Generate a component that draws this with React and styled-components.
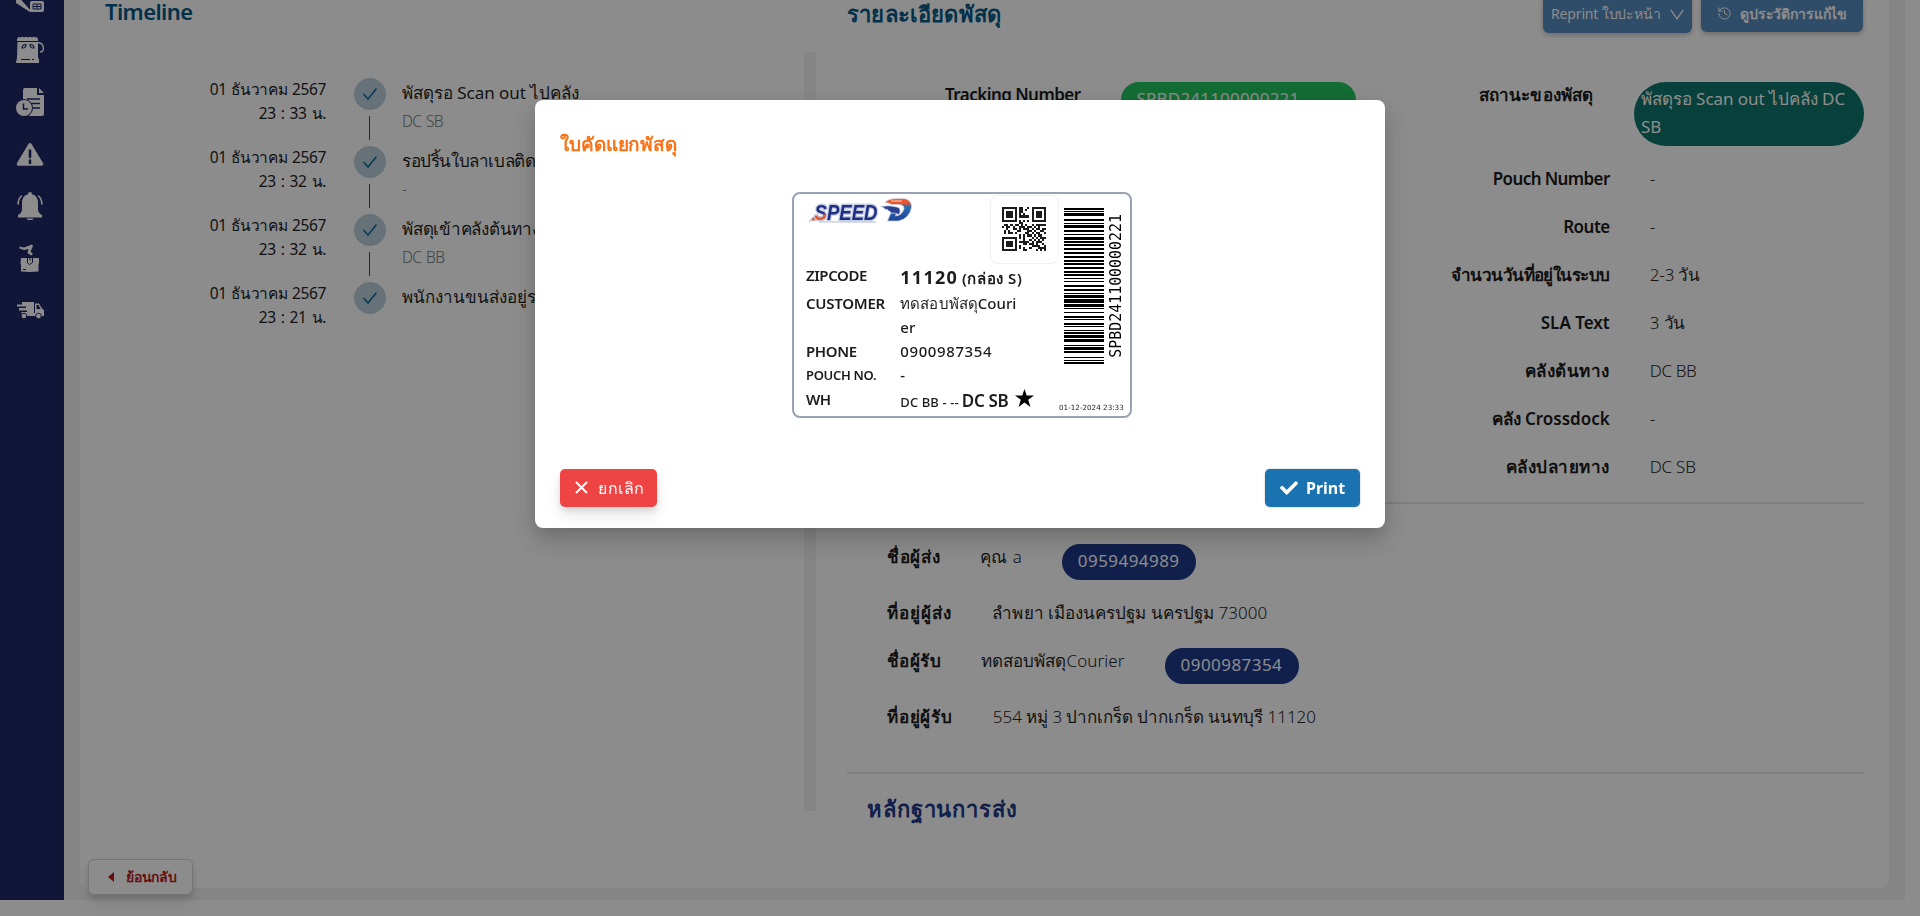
import React from 'react';
import styled, { createGlobalStyle } from 'styled-components';
import { FaCheck } from 'react-icons/fa';
import { History } from 'lucide-react';

const GlobalStyle = createGlobalStyle`
  * { box-sizing: border-box; }
  body {
    margin: 0;
    height: 916px;
    overflow: hidden;
    background: #fff;
    color: #262626;
    font-family: "Noto Sans", sans-serif;
    font-size: 17px;
    line-height: 28px;
  }
`;

/* ---------- page shell ---------- */

const Page = styled.div`
  display: flex;
  width: 1905px;
  height: 900px;
  background: #f3f3f3;
`;

const Sidebar = styled.nav`
  width: 64px;
  height: 916px;
  flex: none;
  display: flex;
  flex-direction: column;
  align-items: center;
  gap: 24px;
  margin-top: -16px;
  background: #1f2868;
  color: #fff;
`;

const SideIcon = styled.svg`
  width: 28px;
  height: 28px;
  flex: none;
  margin-right: 4px;
`;

const Card = styled.main`
  display: flex;
  width: 1809px;
  height: 888px;
  margin-left: 16px;
  background: #fff;
  border-radius: 0 0 8px 8px;
`;

/* ---------- timeline ---------- */

const TimelinePane = styled.section`
  width: 724px;
  flex: none;
  display: flex;
  flex-direction: column;
`;

const Heading = styled.h2`
  margin: 0;
  font-size: 22px;
  font-weight: 600;
  line-height: ${(p) => p.$lh || 28}px;
  letter-spacing: ${(p) => p.$ls || 0}px;
  color: ${(p) => p.$color || '#075985'};
  white-space: nowrap;
`;

const TimelineHead = styled.div`
  height: 78px;
  padding-left: 25px;
`;

const Step = styled.div`
  display: grid;
  grid-template-columns: 246px 32px 1fr;
  column-gap: 28px;
  height: 68px;
`;

const StepWhen = styled.div`
  margin-top: -1px;
`;

const StepDate = styled.div`
  font-size: 15.5px;
  line-height: 24px;
  letter-spacing: -0.35px;
  word-spacing: ${(p) => p.$ws}px;
  text-align: right;
  color: #1f1f1f;
`;

const StepMark = styled.div`
  display: flex;
  flex-direction: column;
  align-items: center;
  gap: 6px;
`;

const StepDot = styled.div`
  width: 32px;
  height: 32px;
  border-radius: 50%;
  background: #bcd0da;
  display: grid;
  place-items: center;
`;

const StepLine = styled.div`
  width: 1px;
  height: 24px;
  margin-right: 1px;
  background: #075985;
`;

const StepText = styled.div`
  margin: 1px 0 0 -12px;
  white-space: nowrap;
  color: #1f1f1f;
  letter-spacing: ${(p) => p.$ls || 0}px;
`;

const StepPlace = styled.div`
  font-size: 15.5px;
  font-weight: 350;
  letter-spacing: -0.7px;
  word-spacing: 1.5px;
  color: #7a7a7a;
`;

const BackButton = styled.button`
  display: flex;
  align-items: center;
  gap: 12px;
  width: 105px;
  height: 36px;
  margin: auto 0 -7px 8px;
  padding: 0 0 0 19px;
  border: 1px solid #d4d4d4;
  border-radius: 6px;
  background: #fff;
  color: #b91c1c;
  font: 600 14px/24px "Noto Sans", sans-serif;
  letter-spacing: -0.2px;
  box-shadow: 0 4px 6px rgba(0, 0, 0, 0.12), 0 10px 15px rgba(0, 0, 0, 0.06);
`;

const Divider = styled.div`
  width: 12px;
  height: 759px;
  margin-top: 52px;
  background: #f3f3f3;
`;

/* ---------- parcel detail ---------- */

const DetailPane = styled.section`
  flex: 1;
  display: flex;
  flex-direction: column;
  padding: 0 25px 0 31px;
`;

const DetailHead = styled.header`
  display: flex;
  align-items: flex-start;
  height: 80px;
`;

const HeadActions = styled.div`
  display: flex;
  gap: 9px;
  margin: -5px 1px 0 auto;
`;

const HeadButton = styled.button`
  display: flex;
  align-items: center;
  gap: ${(p) => p.$gap}px;
  width: ${(p) => p.$w}px;
  height: ${(p) => p.$h}px;
  padding: 0 0 0 ${(p) => p.$pad}px;
  border: 0;
  border-radius: 6px;
  background: #578abd;
  color: #fff;
  font: ${(p) => p.$weight} 14px/24px "Noto Sans", sans-serif;
  letter-spacing: -0.15px;
  white-space: nowrap;
  box-shadow: 0 2px 5px rgba(0, 0, 0, 0.25);
`;

const Columns = styled.div`
  display: grid;
  grid-template-columns: 1fr 1fr;
  height: 424px;
  border-bottom: 2px solid #e5e5e5;
`;

const Column = styled.div`
  display: flex;
  flex-direction: column;
`;

const PillRow = styled.div`
  display: flex;
  justify-content: flex-end;
  align-items: flex-start;
  gap: ${(p) => p.$gap}px;
  height: 75px;

  & > span { margin-top: 1px; }
`;

const Label = styled.span`
  font-weight: 600;
  letter-spacing: ${(p) => p.$ls || 0}px;
  color: #1a1a1a;
  white-space: nowrap;
`;

const Value = styled.span`
  font-weight: 350;
  letter-spacing: ${(p) => p.$ls || 0}px;
  word-spacing: ${(p) => p.$ws || 0}px;
  color: #262626;
  white-space: nowrap;
`;

const StatusPill = styled.div`
  width: ${(p) => p.$w}px;
  margin-top: 2px;
  padding: 3px ${(p) => p.$pad}px 5px;
  border-radius: 32px;
  background: ${(p) => p.$color};
  color: #fff;
  letter-spacing: ${(p) => p.$ls || 0}px;
`;

const DetailRow = styled.div`
  display: grid;
  grid-template-columns: 1fr 1fr;
  height: 48px;
  padding: 10px 0;

  ${Label} { text-align: right; }
  ${Value} { padding-left: 40px; }
`;

const Contacts = styled.div`
  height: 270px;
  padding: 29px 0 0 40px;
  border-bottom: 2px solid #e5e5e5;
`;

const ContactRow = styled.div`
  display: flex;
  align-items: flex-start;
  gap: 40px;
  height: ${(p) => p.$h}px;
  padding-top: 10px;
`;

const PhonePill = styled.span`
  width: 134px;
  height: 36px;
  margin-top: 1px;
  padding: 3px 0 5px 16px;
  border-radius: 18px;
  background: #1e3a8a;
  color: #fff;
  letter-spacing: 0.45px;
`;

const Evidence = styled.div`
  padding: 19px 0 0 20px;
`;

/* ---------- print dialog ---------- */

const Overlay = styled.div`
  position: fixed;
  inset: 0;
  padding: 100px 0 0 535px;
  background: rgba(0, 0, 0, 0.45);
`;

const Dialog = styled.div`
  width: 850px;
  height: 428px;
  padding: 30px 25px 0;
  border-radius: 8px;
  background: #fff;
  box-shadow: 0 6px 16px rgba(0, 0, 0, 0.08), 0 3px 6px -4px rgba(0, 0, 0, 0.12),
    0 9px 28px 8px rgba(0, 0, 0, 0.05), 0 14px 28px rgba(0, 0, 0, 0.12);
`;

const DialogTitle = styled.h3`
  margin: 0;
  font-size: 19px;
  font-weight: 600;
  line-height: 28px;
  letter-spacing: -0.1px;
  color: #f97316;
`;

const DialogFooter = styled.footer`
  display: flex;
  justify-content: space-between;
  margin-top: 51px;
`;

const ActionButton = styled.button`
  display: flex;
  align-items: center;
  gap: ${(p) => p.$gap}px;
  width: ${(p) => p.$w}px;
  height: 38px;
  padding: 0 0 1px 15px;
  border: 0;
  border-radius: 5px;
  background: ${(p) => p.$color};
  color: #fff;
  font: ${(p) => p.$weight} 16px/24px "Noto Sans", sans-serif;
  letter-spacing: ${(p) => p.$ls || 0}px;
  box-shadow: ${(p) => p.$shadow};
`;

/* ---------- parcel label ---------- */

const Slip = styled.div`
  display: flex;
  width: 340px;
  height: 226px;
  margin: 34px 0 0 232px;
  border: 2px solid #9aa1b3;
  border-radius: 8px;
  color: #1c1c1c;
  font-size: 15px;
  line-height: 24px;
`;

const SlipMain = styled.div`
  width: 265px;
  flex: none;
`;

const SlipTop = styled.div`
  display: flex;
  justify-content: space-between;
  height: 69px;
  padding: 1px 0 0 14px;
`;

const LogoArt = styled.svg`
  width: 106px;
  height: 30px;
  margin-top: -1px;
  overflow: visible;
`;

const QrFrame = styled.div`
  display: grid;
  place-items: center;
  width: 69px;
  height: 69px;
  border: 1px solid #f0f0f0;
  border-radius: 8px;
`;

const SlipRow = styled.div`
  display: grid;
  grid-template-columns: 95px 1fr;
  min-height: ${(p) => p.$h || 24}px;
  padding-left: 12px;
  white-space: nowrap;
`;

const SlipKey = styled.span`
  font-size: ${(p) => p.$size || 15}px;
  font-weight: 600;
  letter-spacing: ${(p) => p.$ls || 0}px;
`;

const SlipValue = styled.span`
  padding-top: ${(p) => p.$drop || 0}px;
  margin-left: -0.7px;
  font-weight: 500;
  letter-spacing: ${(p) => p.$ls || 0}px;
`;

const Customer = styled(SlipValue)`
  width: 119px;
  white-space: normal;
  word-break: break-all;
`;

const Zip = styled.b`
  font-size: 18px;
  font-weight: 700;
  letter-spacing: 1.25px;
  margin-right: 4px;
`;

const BoxSize = styled.b`
  font-weight: 600;
  letter-spacing: 0.55px;
`;

const Origin = styled.span`
  font-size: 13px;
  letter-spacing: 0.1px;
`;

const Destination = styled.b`
  font-size: 17px;
  font-weight: 600;
  letter-spacing: -0.3px;
  margin: 0 6px 0 3px;
`;

const SlipSide = styled.div`
  flex: 1;
  display: flex;
  flex-direction: column;
`;

const BarcodeBlock = styled.div`
  display: flex;
  align-items: center;
  gap: 5px;
  height: 156px;
  margin: 13.5px 0 0 4.7px;
`;

const BarcodeText = styled.span`
  writing-mode: vertical-rl;
  transform: rotate(180deg);
  font: 15px/15px "DejaVu Sans Mono", monospace;
  letter-spacing: -0.05px;
  color: #000;
`;

const PrintedAt = styled.span`
  align-self: flex-end;
  margin: auto 9px 3px 0;
  font: 7.2px/10px "DejaVu Sans", sans-serif;
  white-space: nowrap;
`;

/* ---------- QR code, version 1, level Q, mask 0 ---------- */

const QR_SIZE = 21;
const DATA_WORDS = 13;
const ECC_WORDS = 13;
const LEVEL_BITS = 3;
const ALPHABET = '0123456789ABCDEFGHIJKLMNOPQRSTUVWXYZ $%*+-./:';

function gfMul(a, b) {
  let z = 0;
  for (let i = 7; i >= 0; i--) {
    z = (z << 1) ^ ((z >>> 7) * 0x11d);
    z ^= ((b >>> i) & 1) * a;
  }
  return z;
}

function qrMatrix(text) {
  const N = QR_SIZE;
  const bits = [];
  const put = (v, n) => {
    for (let i = n - 1; i >= 0; i--) bits.push((v >>> i) & 1);
  };
  put(2, 4);
  put(text.length, 9);
  for (let i = 0; i + 1 < text.length; i += 2) {
    put(ALPHABET.indexOf(text[i]) * 45 + ALPHABET.indexOf(text[i + 1]), 11);
  }
  put(0, Math.min(4, DATA_WORDS * 8 - bits.length));
  while (bits.length % 8) bits.push(0);
  for (let pad = 0xec; bits.length < DATA_WORDS * 8; pad ^= 0xec ^ 0x11) put(pad, 8);
  const data = [];
  for (let i = 0; i < bits.length; i += 8) data.push(parseInt(bits.slice(i, i + 8).join(''), 2));

  const gen = Array(ECC_WORDS).fill(0);
  gen[ECC_WORDS - 1] = 1;
  let root = 1;
  for (let i = 0; i < ECC_WORDS; i++) {
    for (let j = 0; j < ECC_WORDS; j++) {
      gen[j] = gfMul(gen[j], root);
      if (j + 1 < ECC_WORDS) gen[j] ^= gen[j + 1];
    }
    root = gfMul(root, 2);
  }
  const ecc = Array(ECC_WORDS).fill(0);
  data.forEach((d) => {
    const f = d ^ ecc.shift();
    ecc.push(0);
    gen.forEach((c, i) => { ecc[i] ^= gfMul(c, f); });
  });
  const words = [...data, ...ecc];

  const m = Array.from({ length: N }, () => Array(N).fill(null));
  [[3, 3], [17, 3], [3, 17]].forEach(([cx, cy]) => {
    for (let y = -4; y <= 4; y++) {
      for (let x = -4; x <= 4; x++) {
        if (m[cy + y] === undefined || cx + x < 0 || cx + x >= N) continue;
        const k = Math.max(Math.abs(x), Math.abs(y));
        m[cy + y][cx + x] = k !== 2 && k !== 4 ? 1 : 0;
      }
    }
  });
  for (let i = 8; i < 13; i++) m[6][i] = m[i][6] = (i + 1) % 2;

  const info = LEVEL_BITS << 3;
  let rem = info;
  for (let i = 0; i < 10; i++) rem = (rem << 1) ^ ((rem >>> 9) * 0x537);
  const format = ((info << 10) | rem) ^ 0x5412;
  const bit = (i) => (format >>> i) & 1;
  for (let i = 0; i <= 5; i++) m[i][8] = bit(i);
  m[7][8] = bit(6);
  m[8][8] = bit(7);
  m[8][7] = bit(8);
  for (let i = 9; i < 15; i++) m[8][14 - i] = bit(i);
  for (let i = 0; i < 8; i++) m[8][N - 1 - i] = bit(i);
  for (let i = 8; i < 15; i++) m[N - 15 + i][8] = bit(i);
  m[N - 8][8] = 1;

  let i = 0;
  for (let right = N - 1; right >= 1; right -= 2) {
    if (right === 6) right = 5;
    for (let v = 0; v < N; v++) {
      for (let j = 0; j < 2; j++) {
        const x = right - j;
        const y = ((right + 1) & 2) === 0 ? N - 1 - v : v;
        if (m[y][x] === null) {
          m[y][x] = ((words[i >> 3] >>> (7 - (i & 7))) & 1) ^ ((x + y) % 2 === 0 ? 1 : 0);
          i++;
        }
      }
    }
  }
  return m;
}

function QrCode({ text }) {
  const d = qrMatrix(text)
    .flatMap((row, y) => row.map((on, x) => (on ? `M${x} ${y}h1v1h-1z` : '')))
    .join('');
  return (
    <svg width="44.3" height="44.3" viewBox={`0 0 ${QR_SIZE} ${QR_SIZE}`} shapeRendering="crispEdges">
      <path d={d} fill="#1c1c1c" />
    </svg>
  );
}

/* ---------- Code 128 barcode ---------- */

const CODE_WIDTHS = [
  '211214', '213113', '313121', '131123', '112313', '113141', '311222',
  '231212', '212222', '212222', '222221', '213212', '223112', '2331112',
].join('');

function Barcode() {
  let y = 156;
  const bars = [];
  [...CODE_WIDTHS].forEach((w, i) => {
    y -= Number(w);
    if (i % 2 === 0) bars.push(<rect key={i} x="0" y={y} width="40" height={w} />);
  });
  return <svg width="40" height="156">{bars}</svg>;
}

/* ---------- drawings ---------- */

const DARK = '#1f2868';

const SIDE_ICONS = [
  <g key="scan">
    <path d="M0 10 16 28 H14 L0 19z" fill="#fff" />
    <rect x="14" y="17" width="14" height="11" rx="2" fill="#fff" />
    <path d="M17 20h8v5h-8zM17 22.500h8M21 20v5" fill="none" stroke={DARK} strokeWidth="1" />
  </g>,
  <g key="pouch">
    <path d="M1 3q1.500-3 3.500-1.500q1.500-1.500 3.500 0q2-1.500 4 0q2-1.500 4 0q2-1.500 3.500 0q2-1 2.500 1.500v2H1z" fill="#fff" />
    <path d="M1.500 6H22V21q1.500 3 1 5.500q-.3.500-1 .5H1q-1.300-.3-1-1.500q.8-1.500 1-4z" fill="#fff" />
    <path d="M22 6.500q5 .5 5.500 5.500q0 4-3.500 4" fill="none" stroke="#fff" strokeWidth="1.400" />
    <path d="M6 12q0-3.500 4-3.500q0 4-4 3.500zM18 12q0-3.500-4-3.500q0 4 4 3.500z" fill="none" stroke={DARK} strokeWidth="1.100" />
    <path d="M5 23.500h9M16 23.500h2" stroke={DARK} strokeWidth="1" />
  </g>,
  <g key="report">
    <path d="M9 0H21V7H28V26q0 2-2 2H7V2q0-2 2-2z" fill="#fff" />
    <path d="M23 0 28 5H23z" fill="#fff" />
    <path d="M11 11h13M15 15.500h9M17 20h7" stroke={DARK} strokeWidth="1.300" />
    <circle cx="8" cy="20" r="9" fill={DARK} />
    <circle cx="8" cy="20" r="8" fill="#fff" />
    <path d="M7.500 15.500V21H12" fill="none" stroke={DARK} strokeWidth="1.500" />
  </g>,
  <g key="warning">
    <path d="M12.300 4.200q1.700-2.400 3.400 0L27 23q1 2.500-1.500 2.800H2.500Q0 25.500 1 23z" fill="#fff" />
    <path d="M14 10.500v6.500M14 20.500v2.500" stroke={DARK} strokeWidth="2.600" strokeLinecap="round" />
  </g>,
  <g key="bell">
    <path d="M14 0q2 0 2 2.300q6 1.500 6 8.700v6q0 4 4 6v2.500H2V23q4-2 4-6v-6q0-7.200 6-8.700Q12 0 14 0z" fill="#fff" />
    <path d="M10.500 26.500h7q-1 2-3.500 2t-3.500-2z" fill="#fff" />
    <path d="M5.500 4Q2 7 2.200 12M22.500 4Q26 7 25.800 12" fill="none" stroke="#fff" strokeWidth="1.600" strokeLinecap="round" />
  </g>,
  <g key="pickup">
    <path d="M3.500 2.500 8 3.500 16 .5 17 2 14.500 7.500 17 10 15 11.500 11.500 9 12.500 5 8 6 3.500 4.500z" fill="#fff" />
    <path d="M5 14H23V19L22.500 21V27.500q-9 .8-17.500 0V21L4.500 19z" fill="#fff" />
    <path d="M11.500 14v5l2 1.500 3-2V14M7 25.500h3M14 13.500v3" fill="none" stroke={DARK} strokeWidth="1" />
  </g>,
  <g key="truck">
    <path d="M6 6H18V20H5.500V16H11V14.500H3V12H10V10.500H1V8.500H6z" fill="#fff" />
    <path d="M19 7.500h4l3 5 2 1.500v6H19zM17 17h3v3h-3z" fill="#fff" />
    <path d="M20.500 9H22.500L24.500 13H20.500z" fill={DARK} />
    <circle cx="8" cy="20" r="2.800" fill="#fff" stroke={DARK} strokeWidth="0.900" />
    <circle cx="22.500" cy="20" r="2.800" fill="#fff" stroke={DARK} strokeWidth="0.900" />
  </g>,
];

function SpeedDLogo() {
  return (
    <LogoArt viewBox="0 0 106 30">
      <defs>
        <linearGradient id="sFill" gradientUnits="userSpaceOnUse" x1="0" y1="10" x2="0" y2="26">
          <stop offset="0.550" stopColor="#1f2f86" />
          <stop offset="0.720" stopColor="#e2552f" />
        </linearGradient>
        <linearGradient id="dFill" gradientUnits="userSpaceOnUse" x1="0" y1="4" x2="0" y2="27">
          <stop offset="0.220" stopColor="#e9552c" />
          <stop offset="0.380" stopColor="#2b6fb5" />
          <stop offset="1" stopColor="#1f3f95" />
        </linearGradient>
      </defs>
      <path d="M1 28 5 23.500H14L12 27.800 68 28" fill="none" stroke="#c5cde0" strokeWidth="1.500" />
      <path d="M3 26.500 6.500 22H15L13 26.500z" fill="#e2552f" />
      <g fontFamily="Liberation Sans, sans-serif" fontWeight="700" fontStyle="italic" fontSize="21.500" strokeLinejoin="round">
        <text x="6.500" y="25.600" textLength="63" lengthAdjust="spacingAndGlyphs" fill="#1f2f86" stroke="#c5cde0" strokeWidth="2.800" paintOrder="stroke"><tspan fill="url(#sFill)">S</tspan>PEED</text>
      </g>
      <path d="M77 8.500Q80 4.700 88 4.700H97Q104 6.500 103.500 13.500Q101.500 24.500 90.500 27H79.500L82.500 19.500 89.500 16.500 87.500 22Q94.500 21 96 14.500Q96 10.500 90 10.500H84Q81 8.800 77 8.500z" fill="url(#dFill)" stroke="#c5cde0" strokeWidth="0.800" />
      <path d="M72 12.500Q82 10.500 91 13.500Q93.500 17 91 20.500Q87 18.500 82 19Q84 17.500 79.500 16.800Q82 15.800 76 15Q78 14 72 12.500z" fill="#2c3f90" stroke="#dfe5f2" strokeWidth="0.700" />
      <path d="M83 7H94" stroke="#f6c3ad" strokeWidth="1.200" />
    </LogoArt>
  );
}

const TRACKING = 'SPBD241100000221';

const STEPS = [
  { date: '01 ธันวาคม 2567', time: '23 : 33 น.', text: 'พัสดุรอ Scan out ไปคลัง', place: 'DC SB', ls: -0.03 },
  { date: '01 ธันวาคม 2567', time: '23 : 32 น.', text: 'รอปริ้นใบลาเบลติดพัสดุ', place: '-', ls: -0.4 },
  { date: '01 ธันวาคม 2567', time: '23 : 32 น.', text: 'พัสดุเข้าคลังต้นทาง', place: 'DC BB', ls: -0.25 },
  { date: '01 ธันวาคม 2567', time: '23 : 21 น.', text: 'พนักงานขนส่งอยู่ระหว่างเข้ารับพัสดุ', place: '', ls: 0 },
];

const DETAILS = [
  ['Pouch Number', '-', -0.6, 0],
  ['Route', '-', -0.5, 0],
  ['จำนวนวันที่อยู่ในระบบ', '2-3 วัน', -0.53, -0.15],
  ['SLA Text', '3 วัน', 0, -0.15],
  ['คลังต้นทาง', 'DC BB', 0.5, -0.4],
  ['คลัง Crossdock', '-', 0, 0],
  ['คลังปลายทาง', 'DC SB', 0.5, -0.25],
];

export default function App() {
  return (
    <>
      <GlobalStyle />
      <Page>
        <Sidebar>
          {SIDE_ICONS.map((icon) => (
            <SideIcon key={icon.key} viewBox="0 0 28 28">{icon}</SideIcon>
          ))}
        </Sidebar>
        <Card>
          <TimelinePane>
            <TimelineHead>
              <Heading $lh={23} $ls={-0.57}>Timeline</Heading>
            </TimelineHead>
            {STEPS.map((s, i) => (
              <Step key={i}>
                <StepWhen>
                  <StepDate $ws={1}>{s.date}</StepDate>
                  <StepDate $ws={1.3}>{s.time}</StepDate>
                </StepWhen>
                <StepMark>
                  <StepDot>
                    <svg width="16" height="14" viewBox="0 0 16 14">
                      <path d="M1.500 7 6 12 14.500 1.500" fill="none" stroke="#0b6aa3" strokeWidth="1.500" />
                    </svg>
                  </StepDot>
                  {i < STEPS.length - 1 && <StepLine />}
                </StepMark>
                <StepText $ls={s.ls}>
                  {s.text}
                  <StepPlace>{s.place}</StepPlace>
                </StepText>
              </Step>
            ))}
            <BackButton>
              <svg width="6" height="10" viewBox="0 0 6 10"><path d="M6 0v10L0 5z" fill="#b91c1c" /></svg>
              ย้อนกลับ
            </BackButton>
          </TimelinePane>
          <Divider />
          <DetailPane>
            <DetailHead>
              <Heading $lh={26} $ls={0.17}>รายละเอียดพัสดุ</Heading>
              <HeadActions>
                <HeadButton $w={149} $h={38} $pad={8} $gap={9} $weight={400}>
                  Reprint ใบปะหน้า
                  <svg width="14" height="11" viewBox="0 0 14 11"><path d="M.8.8 7 9.800 13.200.8" fill="none" stroke="#fff" strokeWidth="1.300" /></svg>
                </HeadButton>
                <HeadButton $w={162} $h={37} $pad={16} $gap={8} $weight={600}>
                  <History size={15} strokeWidth={1.6} />
                  ดูประวัติการแก้ไข
                </HeadButton>
              </HeadActions>
            </DetailHead>
            <Columns>
              <Column>
                <PillRow $gap={40}>
                  <Label $ls={-0.55}>Tracking Number</Label>
                  <StatusPill $w={235} $pad={16} $color="#22c55e" $ls={0.2}>{TRACKING}</StatusPill>
                </PillRow>
              </Column>
              <Column>
                <PillRow $gap={41}>
                  <Label $ls={0.09}>สถานะของพัสดุ</Label>
                  <StatusPill $w={230} $pad={7} $color="#0f766e" $ls={-0.05}>พัสดุรอ Scan out ไปคลัง DC SB</StatusPill>
                </PillRow>
                {DETAILS.map(([label, value, ls, vls]) => (
                  <DetailRow key={label}>
                    <Label $ls={ls}>{label}</Label>
                    <Value $ls={vls}>{value}</Value>
                  </DetailRow>
                ))}
              </Column>
            </Columns>
            <Contacts>
              <ContactRow $h={56}>
                <Label $ls={0.65}>ชื่อผู้ส่ง</Label>
                <Value $ws={1}>คุณ a</Value>
                <PhonePill>0959494989</PhonePill>
              </ContactRow>
              <ContactRow $h={48}>
                <Label $ls={1.07}>ที่อยู่ผู้ส่ง</Label>
                <Value $ls={0.04}>ลำพยา เมืองนครปฐม นครปฐม 73000</Value>
              </ContactRow>
              <ContactRow $h={56}>
                <Label $ls={0.4}>ชื่อผู้รับ</Label>
                <Value $ls={0.07}>ทดสอบพัสดุCourier</Value>
                <PhonePill>0900987354</PhonePill>
              </ContactRow>
              <ContactRow $h={48}>
                <Label $ls={0.8}>ที่อยู่ผู้รับ</Label>
                <Value $ls={-0.05}>554 หมู่ 3 ปากเกร็ด ปากเกร็ด นนทบุรี 11120</Value>
              </ContactRow>
            </Contacts>
            <Evidence>
              <Heading $lh={30} $ls={0.88} $color="#1e3a8a">หลักฐานการส่ง</Heading>
            </Evidence>
          </DetailPane>
        </Card>
      </Page>

      <Overlay>
        <Dialog>
          <DialogTitle>ใบคัดแยกพัสดุ</DialogTitle>
          <Slip>
            <SlipMain>
              <SlipTop>
                <SpeedDLogo />
                <QrFrame><QrCode text={TRACKING} /></QrFrame>
              </SlipTop>
              <SlipRow $h={28}>
                <SlipKey $ls={-0.41}>ZIPCODE</SlipKey>
                <SlipValue $drop={2}><Zip>11120</Zip><BoxSize>(กล่อง S)</BoxSize></SlipValue>
              </SlipRow>
              <SlipRow $h={48}>
                <SlipKey $ls={-0.25}>CUSTOMER</SlipKey>
                <Customer $ls={0.05}>ทดสอบพัสดุCourier</Customer>
              </SlipRow>
              <SlipRow>
                <SlipKey $ls={-0.39}>PHONE</SlipKey>
                <SlipValue $ls={0.6}>0900987354</SlipValue>
              </SlipRow>
              <SlipRow>
                <SlipKey $size={13} $ls={-0.31}>POUCH NO.</SlipKey>
                <SlipValue>-</SlipValue>
              </SlipRow>
              <SlipRow>
                <SlipKey $ls={-0.67}>WH</SlipKey>
                <SlipValue $drop={2}>
                  <Origin>DC BB - --</Origin>
                  <Destination>DC SB</Destination>
                  <svg width="19" height="18" viewBox="0 0 19 18"><path d="M9.500 0 11.700 6.500H19L13.200 10.700 15.400 18 9.500 13.600 3.600 18 5.800 10.700 0 6.500H7.300z" fill="#000" /></svg>
                </SlipValue>
              </SlipRow>
            </SlipMain>
            <SlipSide>
              <BarcodeBlock>
                <Barcode />
                <BarcodeText>{TRACKING}</BarcodeText>
              </BarcodeBlock>
              <PrintedAt>01-12-2024 23:33</PrintedAt>
            </SlipSide>
          </Slip>
          <DialogFooter>
            <ActionButton $w={97} $gap={10} $color="#ef4444" $weight={400} $ls={0.5} $shadow="0 4px 6px rgba(0,0,0,.1), 0 10px 15px rgba(0,0,0,.08)">
              <svg width="13" height="13" viewBox="0 0 13 13"><path d="M1.500 1.500l10 10M11.500 1.500l-10 10" stroke="#fff" strokeWidth="2" strokeLinecap="round" /></svg>
              ยกเลิก
            </ActionButton>
            <ActionButton $w={95} $gap={8} $color="#1a73b0" $weight={700} $shadow="0 0 2px rgba(0,0,0,.3)">
              <FaCheck size={18} />
              Print
            </ActionButton>
          </DialogFooter>
        </Dialog>
      </Overlay>
    </>
  );
}
